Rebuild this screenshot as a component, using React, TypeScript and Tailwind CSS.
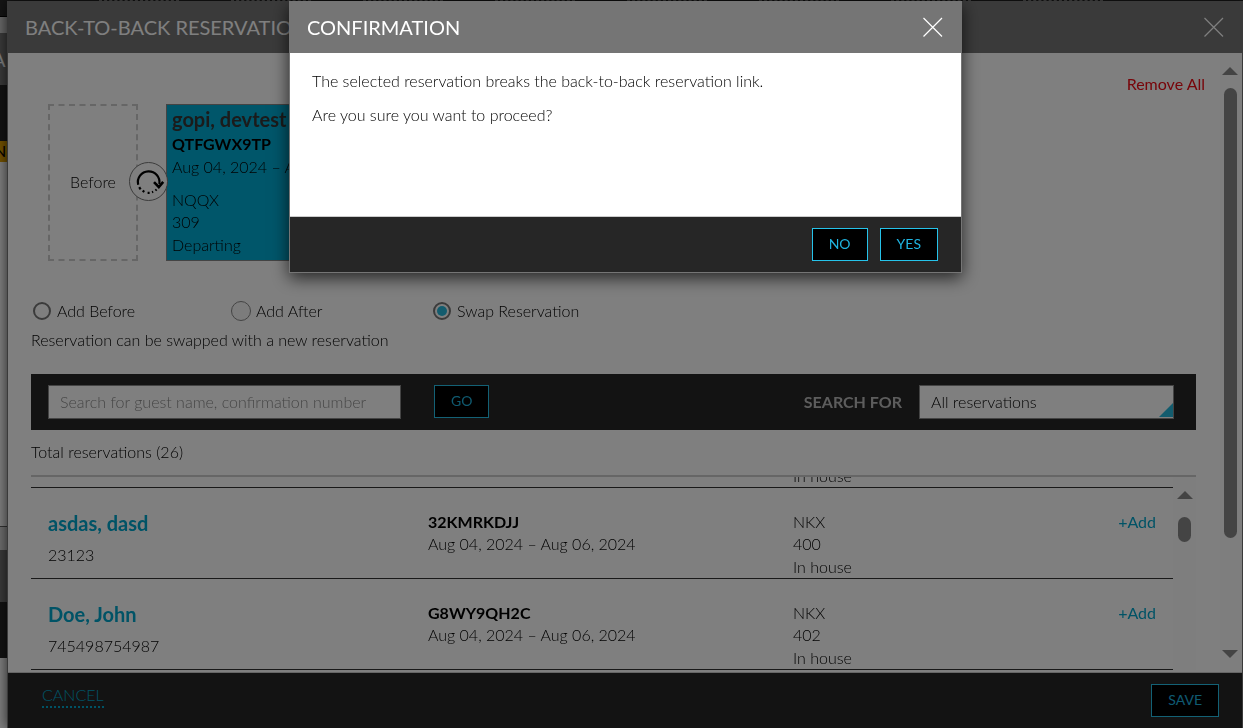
import { useState, type ReactNode } from "react";

type Reservation = {
  name: string;
  profileId: string;
  confirmation: string;
  dates: string;
  roomType: string;
  room: string;
  status: string;
};

const reservations: Reservation[] = [
  {
    name: "asdas, dasd",
    profileId: "23123",
    confirmation: "32KMRKDJJ",
    dates: "Aug 04, 2024 – Aug 06, 2024",
    roomType: "NKX",
    room: "400",
    status: "In house",
  },
  {
    name: "Doe, John",
    profileId: "745498754987",
    confirmation: "G8WY9QH2C",
    dates: "Aug 04, 2024 – Aug 06, 2024",
    roomType: "NKX",
    room: "402",
    status: "In house",
  },
];

const modes = ["Add Before", "Add After", "Swap Reservation"];

function CloseIcon() {
  return (
    <svg width="20" height="20" viewBox="0 0 20 20" stroke="currentColor" strokeWidth="1.2">
      <path d="M0.5 1L19 19.5M19 1L0.5 19.5" />
    </svg>
  );
}

function Arrow({ down = false }: { down?: boolean }) {
  return (
    <svg width="16" height="8" viewBox="0 0 16 8" fill="#888888">
      <path d={down ? "M0 0H16L8 8Z" : "M0 8H16L8 0Z"} />
    </svg>
  );
}

function LinkIcon() {
  return (
    <svg width="37" height="37" viewBox="1 1 37 37" fill="none" stroke="#000" strokeWidth="2.2">
      <path d="M9.2 22.8A10.8 10.8 0 1 1 30.3 22" />
      <path d="M25 20.2L29.8 25L34.2 19.8" strokeWidth="2.6" />
      <path d="M10.2 25.2L11.6 27.3M13.6 28.8L15.4 29.9M18.6 30.8H20.6M23 30.2L24.2 29.8M26.4 28.5L27.6 27.5" />
    </svg>
  );
}

function ActionButton({ children, onClick }: { children: ReactNode; onClick?: () => void }) {
  return (
    <button
      type="button"
      onClick={onClick}
      className="h-[33px] border border-[#26c3ea] bg-black px-4 pb-0.5 text-sm font-normal text-[#1fb4e0] cursor-pointer"
    >
      {children}
    </button>
  );
}

function DialogHeader({ title }: { title: string }) {
  return (
    <header className="flex h-[52px] shrink-0 items-center justify-between bg-[#757575] pr-[18px] pl-[17px] text-white">
      <h2 className="text-xl font-normal whitespace-nowrap">{title}</h2>
      <button type="button" aria-label="Close" className="cursor-pointer">
        <CloseIcon />
      </button>
    </header>
  );
}

function ReservationRow({ item }: { item: Reservation }) {
  return (
    <li className="grid h-[91px] shrink-0 grid-cols-[380fr_365fr_363fr] border-b border-[#333333] px-[17px] pt-[23px]">
      <div>
        <h3 className="text-xl leading-6 text-[#00a6cc] font-bold">{item.name}</h3>
        <p className="mt-[9px]">{item.profileId}</p>
      </div>
      <div>
        <p className="font-bold">{item.confirmation}</p>
        <p>{item.dates}</p>
      </div>
      <div className="flex justify-between">
        <div>
          <p>{item.roomType}</p>
          <p>{item.room}</p>
          <p className="pt-px">{item.status}</p>
        </div>
        <button type="button" className="self-start font-normal text-[#00a6cc] cursor-pointer">
          +Add
        </button>
      </div>
    </li>
  );
}

// Strip of the page that stays visible behind the dialogs
function PageBehind() {
  return (
    <div className="flex h-screen flex-col overflow-hidden bg-white">
      <div className="h-4 bg-[#2a2a2a] pl-[99px]">
        <div className="flex h-px gap-[52px]">
          {[0, 1, 2, 3, 4, 5, 6, 7].map((n) => (
            <span key={n} className="w-20 border-t border-dashed border-[#999999]" />
          ))}
        </div>
      </div>
      <div className="h-[17px] border-t border-black bg-[#d0d0d0]" />
      <div className="flex h-[52px] items-center bg-[#757575] text-xl font-normal text-white">
        <span className="-ml-2">A</span>
      </div>
      <div className="h-14 bg-[#262626]" />
      <div className="h-[21px] bg-[#e8a400] leading-5 font-normal">
        <span className="-ml-1.5">N</span>
      </div>
      <div className="h-[365px] border-b border-[#666666]" />
      <div className="h-[23px] bg-[#dddddd]" />
      <div className="h-[52px] bg-[#757575]" />
      <div className="h-14 bg-[#262626]" />
    </div>
  );
}

function ReservationsDialog() {
  const [mode, setMode] = useState("Swap Reservation");

  return (
    <section className="fixed inset-0 mt-px ml-[7px] flex flex-col overflow-hidden border-x border-[#757575] bg-white shadow-[0_0_12px_rgba(0,0,0,0.7)]">
      <DialogHeader title="BACK-TO-BACK RESERVATIONS" />

      <div className="flex min-h-0 flex-1">
        <div className="min-w-0 flex-1 overflow-hidden pt-[19px] pr-[15px] pl-[23px]">
          {/* Linked reservations */}
          <div className="flex items-start justify-between">
            <div className="mt-8 ml-[17px] flex">
              <div className="relative mr-7 flex h-[157px] w-[90px] items-center justify-center border-2 border-dashed border-[#cccccc] pb-0.5">
                Before
                <span className="absolute top-[56px] -right-8 rounded-full border border-[#777777] bg-white">
                  <LinkIcon />
                </span>
              </div>
              <div className="h-[157px] w-[270px] border border-[#888888] bg-[#00acd4] pt-0.5 pl-[5px]">
                <h3 className="text-xl leading-6 font-bold text-[#363636]">gopi, devtest</h3>
                <p className="pt-0.5 font-bold">QTFGWX9TP</p>
                <p className="pt-px">Aug 04, 2024 – Aug 06, 2024</p>
                <p className="mt-[11px]">NQQX</p>
                <p>309</p>
                <p className="pt-px">Departing</p>
              </div>
            </div>
            <button type="button" className="leading-6 font-normal text-[#f00a14] cursor-pointer">
              Remove All
            </button>
          </div>

          <div className="mr-[9px]">
            {/* Mode */}
            <div className="mt-[39px] flex">
              {modes.map((item) => (
                <label
                  key={item}
                  className={
                    item === "Add After"
                      ? "flex w-[200px] items-center gap-[5px] whitespace-nowrap"
                      : "flex w-[200px] items-center gap-1.5 pl-0.5 whitespace-nowrap"
                  }
                >
                  <input
                    type="radio"
                    name="mode"
                    checked={mode === item}
                    onChange={() => setMode(item)}
                    className={
                      item === "Add After"
                        ? "size-5 shrink-0 appearance-none rounded-full border border-[#888888] bg-[#f8f8f8] checked:bg-[#26b9dc]"
                        : "size-[18px] shrink-0 appearance-none rounded-full border-2 border-[#777777] bg-white bg-clip-content p-[2px] checked:bg-[#26b9dc]"
                    }
                  />
                  {item}
                </label>
              ))}
            </div>
            <p className="mt-1.5 leading-6">Reservation can be swapped with a new reservation</p>

            {/* Search bar */}
            <form className="mt-[22px] flex h-14 items-start bg-[#262626] pt-[11px] pr-[22px] pl-[17px]">
              <input
                type="text"
                aria-label="Search"
                placeholder="Search for guest name, confirmation number"
                className="mr-[33px] h-[34px] w-[353px] border border-[#888888] bg-white px-[11px] pb-0.5 outline-none placeholder:text-[#8c8c8c]"
              />
              <ActionButton>GO</ActionButton>
              <div className="ml-auto flex items-center gap-[17px]">
                <label htmlFor="searchFor" className="font-bold text-[#bbbbbb]">
                  SEARCH FOR
                </label>
                <div className="relative">
                  <select
                    id="searchFor"
                    className="block h-[34px] w-[255px] appearance-none border border-[#888888] bg-white px-[11px] outline-none"
                  >
                    <option>All reservations</option>
                  </select>
                  <svg width="14" height="14" viewBox="0 0 14 14" className="pointer-events-none absolute right-px bottom-0.5">
                    <path d="M14 0V14H0Z" fill="#26b9dc" />
                  </svg>
                </div>
              </div>
            </form>

            <p className="mt-2.5 leading-6">Total reservations (26)</p>

            {/* Results, scrolled to the second row */}
            <div className="mt-[11px] flex h-[195px] border-t-2 border-[#cccccc]">
              <ul className="flex flex-1 flex-col justify-end overflow-hidden">
                <ReservationRow item={{ ...reservations[0], name: "", profileId: "", confirmation: "", dates: "" }} />
                {reservations.map((item) => (
                  <ReservationRow key={item.confirmation} item={item} />
                ))}
              </ul>
              <div className="flex w-[23px] flex-col items-center bg-[#fcfcfc] pt-3.5">
                <Arrow />
                <div className="mt-[18px] h-[25px] w-[13px] rounded-full bg-[#888888]" />
              </div>
            </div>
          </div>
        </div>

        <div className="flex w-[22px] flex-col items-center bg-[#fcfcfc] py-3.5 pr-0.5">
          <Arrow />
          <div className="mt-[13px] mb-auto h-[450px] w-[13px] rounded-full bg-[#888888]" />
          <Arrow down />
        </div>
      </div>

      <footer className="flex h-14 shrink-0 items-start justify-between border-t border-[#cccccc] bg-[#262626] pt-[11px] pr-[23px] pl-[34px]">
        <a href="#" className="border-b-2 border-dotted border-[#00a6cc] text-[#00a6cc]">
          CANCEL
        </a>
        <ActionButton>SAVE</ActionButton>
      </footer>
    </section>
  );
}

function ConfirmationDialog() {
  return (
    <section
      role="dialog"
      className="w-[673px] border border-t-0 border-[#757575] bg-white shadow-[0_5px_16px_rgba(0,0,0,0.7)]"
    >
      <DialogHeader title="CONFIRMATION" />
      <div className="h-[163px] px-[22px] pt-4 leading-6">
        <p>The selected reservation breaks the back-to-back reservation link.</p>
        <p className="mt-2.5">Are you sure you want to proceed?</p>
      </div>
      <footer className="flex h-14 items-start justify-end gap-3 border-t border-[#cccccc] bg-[#262626] pt-[11px] pr-[23px]">
        <ActionButton>NO</ActionButton>
        <ActionButton>YES</ActionButton>
      </footer>
    </section>
  );
}

export default function App() {
  return (
    <div className="h-screen overflow-hidden font-['Lato',sans-serif] text-base leading-[22px] font-light text-black">
      <PageBehind />
      <ReservationsDialog />
      <div className="fixed inset-0 flex items-start justify-center bg-black/50 pt-px pl-2">
        <ConfirmationDialog />
      </div>
    </div>
  );
}
